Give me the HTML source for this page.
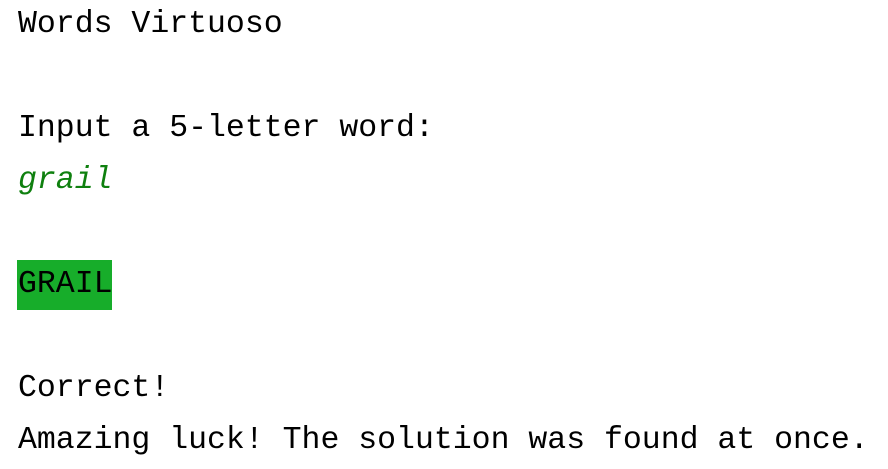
<!DOCTYPE html>
<html><head><meta charset="utf-8"><style>
html,body{margin:0;padding:0;background:#fff;width:888px;height:469px;overflow:hidden}
pre{margin:0;position:absolute;left:18px;top:-1px;font-family:"Liberation Mono",monospace;font-size:31.5px;line-height:52px;color:#000}
.i{color:#0f800f;font-style:italic}
.g{background:#17ad2a;display:inline-block;line-height:50px;margin-left:-1px;padding:0 0 0 1px;width:94px}
</style></head><body>
<pre>Words Virtuoso

Input a 5-letter word:
<span class="i">grail</span>

<span class="g">GRAIL</span>

Correct!
Amazing luck! The solution was found at once.</pre>
</body></html>
